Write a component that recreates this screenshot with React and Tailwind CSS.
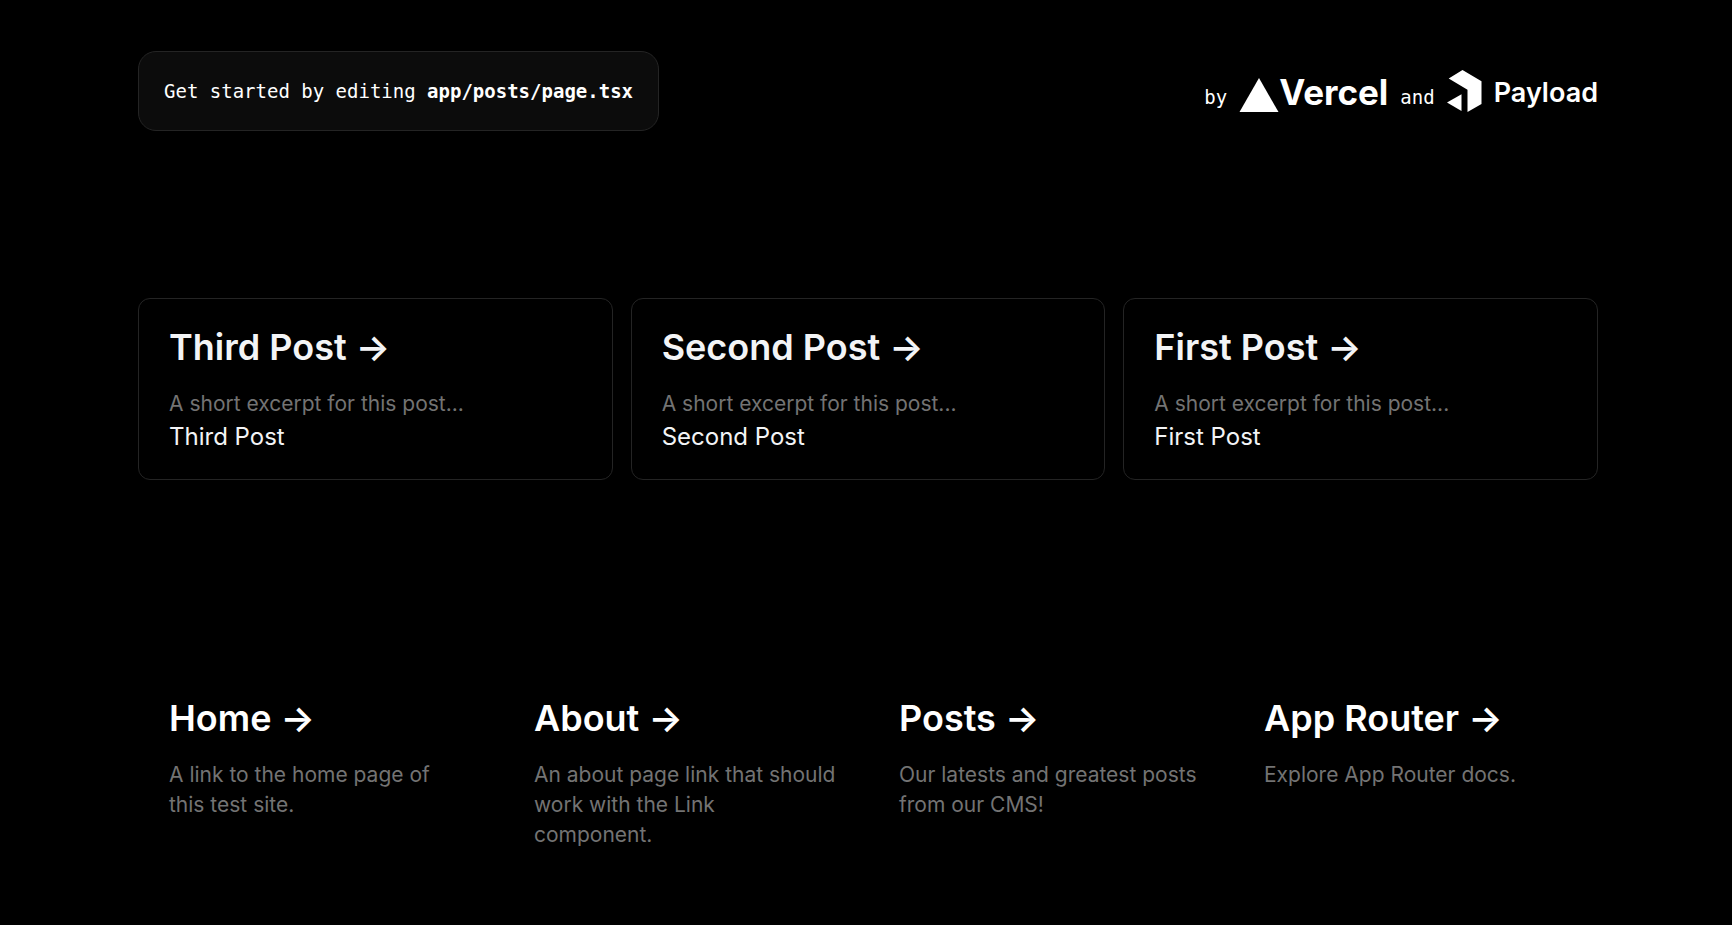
const posts = ['Third Post', 'Second Post', 'First Post'];

const links = [
  { title: 'Home', text: 'A link to the home page of this\u00a0test site.' },
  { title: 'About', text: 'An about page link that should work with the Link component.' },
  { title: 'Posts', text: 'Our latests and greatest posts from our CMS!' },
  { title: 'App Router', text: 'Explore App Router docs.' },
];

function VercelLogo() {
  return (
    <a href="#vercel" className="flex items-end font-[Inter,sans-serif]">
      <svg viewBox="0 0 40 34" className="h-[34px] w-10" fill="white" aria-hidden="true">
        <path d="M20 0L39.5 34H0.5Z" />
      </svg>
      <span className="pb-2 text-[35px] leading-6 font-bold">Vercel</span>
    </a>
  );
}

function PayloadLogo() {
  return (
    <a href="#payload" className="flex items-center gap-3 font-[Inter,sans-serif]">
      <svg viewBox="0 0 35 42" className="h-[42px] w-[35px]" fill="white" aria-hidden="true">
        <path d="M15.5 0L34.5 11.3V34L20.5 42V19.7L1.7 8.5Z" />
        <path d="M14.5 24.2V41L0 32.4Z" />
      </svg>
      <span className="pt-1 text-[27px] leading-9 font-semibold">Payload</span>
    </a>
  );
}

function Heading({ children }) {
  return (
    <h2 className="mb-[19px] text-[36px] leading-[45px] font-semibold">
      {children} <span>→</span>
    </h2>
  );
}

export default function App() {
  return (
    <main className="min-h-screen bg-black pt-[51px] pr-[134px] pb-10 pl-[138px] font-[Inter,sans-serif] text-white">
      <header className="flex items-center justify-between font-['DejaVu_Sans_Mono',monospace] text-[19px]">
        <p className="rounded-[18px] border border-[#242424] bg-[#0c0c0c] px-[25px] py-6 leading-[30px]">
          Get started by editing <code className="font-['DejaVu_Sans_Mono',monospace] font-bold">app/posts/page.tsx</code>
        </p>
        <div className="flex items-center gap-3">
          <span className="pt-3">by</span>
          <div className="pt-2"><VercelLogo /></div>
          <span className="pt-3">and</span>
          <PayloadLogo />
        </div>
      </header>

      <section className="mt-[167px] grid grid-cols-3 gap-[18px]">
        {posts.map((title) => (
          <a key={title} href="#post" className="rounded-xl border border-[#242424] px-[30px] pt-[26px] pb-6">
            <div className="text-[#f3f4f6]"><Heading>{title}</Heading></div>
            <p className="text-[21px] leading-[30px] text-[#737373]">A short excerpt for this post...</p>
            <p className="text-[24px] leading-9 text-[#f3f4f6]">{title}</p>
          </a>
        ))}
      </section>

      <nav className="mt-[189px] grid grid-cols-4">
        {links.map(({ title, text }) => (
          <a key={title} href="#page" className="border border-transparent px-[30px] py-[26px]">
            <Heading>{title}</Heading>
            <p className="text-[21px] leading-[30px] text-[#737373]">{text}</p>
          </a>
        ))}
      </nav>
    </main>
  );
}
